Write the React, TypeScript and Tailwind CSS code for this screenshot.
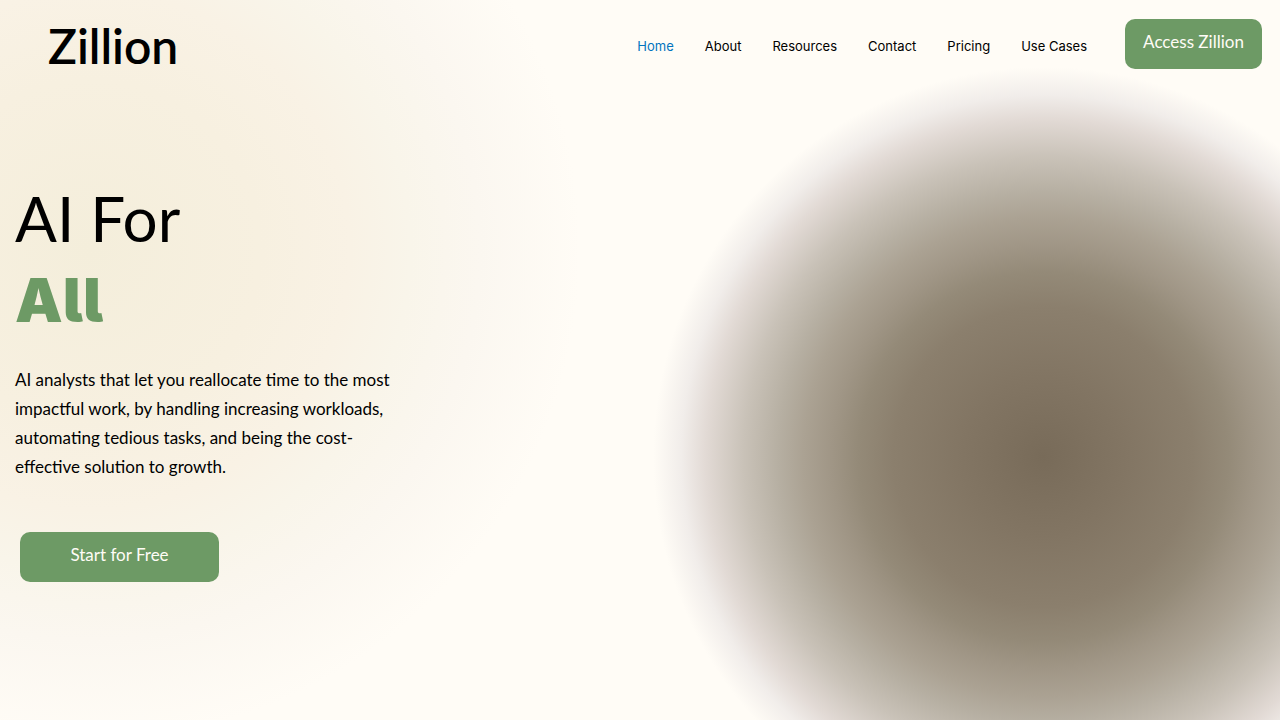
const links = ["Home", "About", "Resources", "Contact", "Pricing", "Use Cases"]

export default function App() {
  return (
    <div className="min-h-screen overflow-hidden bg-[#fffcf6] bg-[radial-gradient(circle_at_81.5%_457px,#786b59_0px,#827563_80px,#8b7f6d_150px,#948a78_185px,#a09686_212px,#aba293_240px,#b6afa2_265px,#c9c2b8_300px,#e2dad5_338px,#f1edea_362px,transparent_390px),radial-gradient(circle_at_90px_250px,#f4eedb_0px,#f7f0e0_170px,#f9f2e5_260px,#f9f5ea_320px,#fbf7f0_390px,#fffcf6_490px)] font-['Lato',sans-serif] text-black">
      <header className="flex h-[88px] items-center justify-between pl-12 pr-[18px]">
        <a href="#" className="pt-1 text-[48px] leading-none font-semibold">
          Zillion
        </a>
        <div className="flex items-center gap-[38px]">
          <nav className="flex gap-[31px] pt-1.5 font-['Inter',sans-serif] text-[13px]">
            {links.map((link) => (
              <a key={link} href="#" className={link === "Home" ? "text-[#0274be]" : ""}>
                {link}
              </a>
            ))}
          </nav>
          <button
            type="button"
            className="h-[50px] w-[137px] rounded-[10px] bg-[#6d9a65] pb-1 text-[17px] text-[#fffcf6]"
          >
            Access Zillion
          </button>
        </div>
      </header>

      <main className="px-[15px] pt-[89px]">
        <h1 className="text-[62px] leading-[82px]">
          AI For
          <span className="block font-['Inter',sans-serif] text-[60px] font-black text-[#6d9a65] [font-feature-settings:'cv05']">
            All
          </span>
        </h1>
        <p className="mt-6 max-w-[400px] text-[17px] leading-[29px]">
          AI analysts that let you reallocate time to the most impactful work, by handling increasing workloads,
          automating tedious tasks, and being the cost-effective solution to growth.
        </p>
        <button
          type="button"
          className="mt-[51px] ml-[5px] h-[50px] w-[199px] rounded-[10px] bg-[#6d9a65] pb-1 text-[17px] text-[#fffcf6]"
        >
          Start for Free
        </button>
      </main>
    </div>
  )
}
